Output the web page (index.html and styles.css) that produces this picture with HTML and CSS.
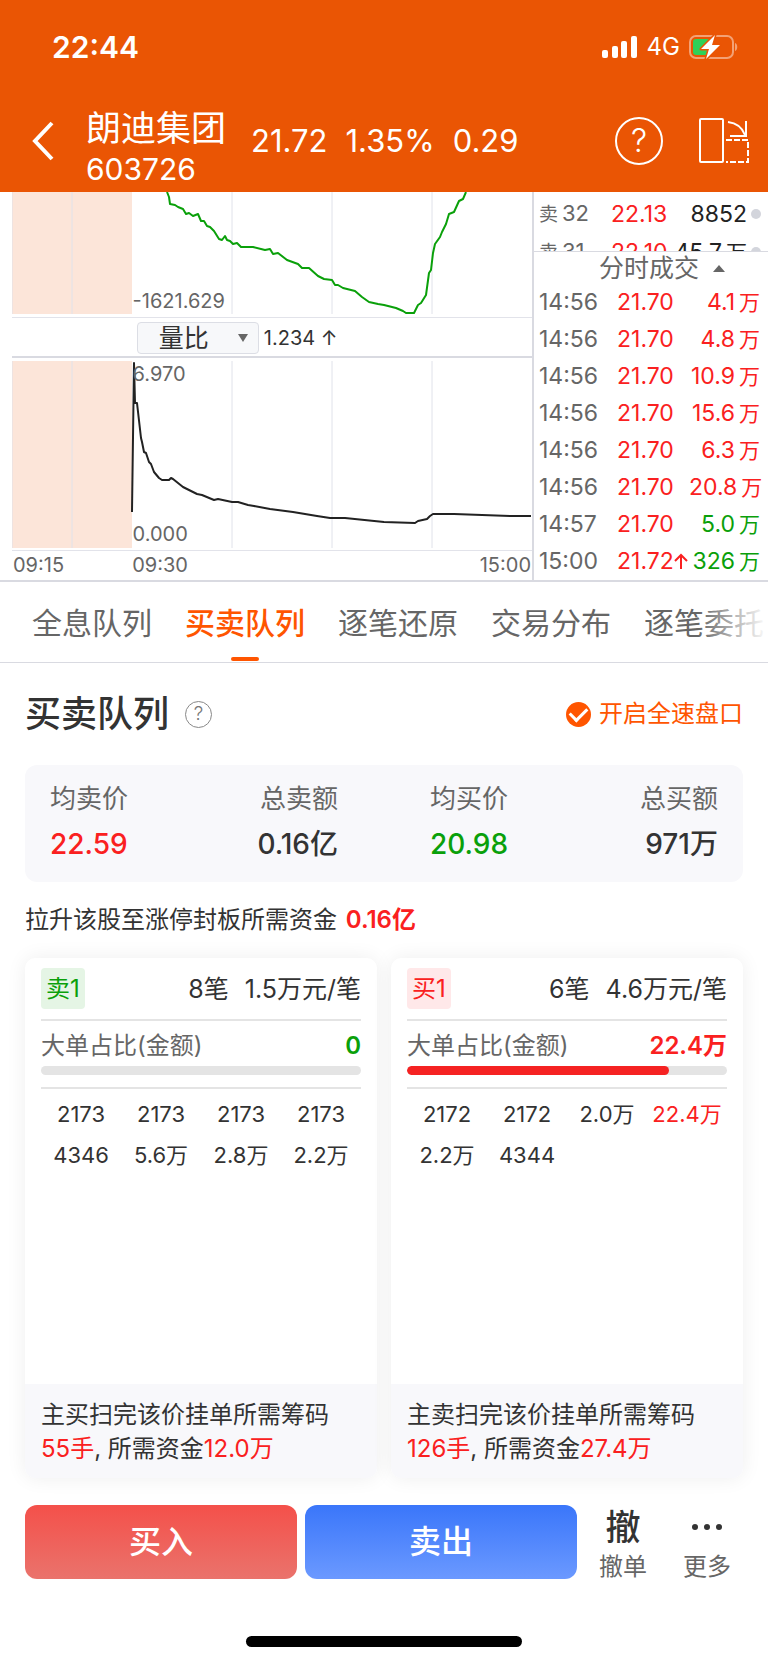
FILE: index.html
```html
<!DOCTYPE html>
<html lang="zh-CN">
<head>
    <meta charset="utf-8">
    <meta name="viewport" content="width=device-width, initial-scale=1">
    <title>朗迪集团 603726</title>
    <link rel="stylesheet" href="styles.css">
</head>
<body>
    <header class="header">
        <div class="status-bar">
            <span class="clock">22:44</span>
            <div class="status-icons">
                <svg width="36" height="22" viewBox="0 0 36 22" fill="#fff">
                    <rect x="0" y="14" width="6" height="8" rx="2"/>
                    <rect x="10" y="10" width="6" height="12" rx="2"/>
                    <rect x="19" y="5" width="6" height="17" rx="2"/>
                    <rect x="29" y="0" width="6" height="22" rx="2"/>
                </svg>
                <span class="network">4G</span>
                <svg width="50" height="26" viewBox="0 0 50 26">
                    <rect x="1" y="2" width="43" height="22" rx="6" fill="none" stroke="#fff" stroke-opacity=".45" stroke-width="2"/>
                    <path d="M46 9v8c3-1 3-7 0-8z" fill="#fff" fill-opacity=".45"/>
                    <rect x="4" y="5" width="17" height="16" rx="3" fill="#30d158"/>
                    <path d="M26 1 12 15h8l-3 10 14-14h-8z" fill="#fff" stroke="#ea5504" stroke-width="3" paint-order="stroke" stroke-linejoin="round"/>
                </svg>
            </div>
        </div>
        <div class="nav-bar">
            <button class="icon-btn" aria-label="返回">
                <svg width="22" height="40" viewBox="0 0 22 40" fill="none" stroke="#fff" stroke-width="4">
                    <path d="M20 2 3 20l17 18"/>
                </svg>
            </button>
            <div class="stock">
                <h1 class="stock-name">朗迪集团</h1>
                <div class="stock-code">603726</div>
            </div>
            <div class="quote">
                <span>21.72</span>
                <span>1.35%</span>
                <span>0.29</span>
            </div>
            <div class="nav-actions">
                <button class="icon-btn help" aria-label="帮助">?</button>
                <button class="icon-btn" aria-label="横屏">
                    <svg width="50" height="46" viewBox="0 0 50 46" fill="none" stroke="#fff" stroke-width="2">
                        <rect x="1" y="1" width="23" height="43" rx="1"/>
                        <path d="M29 4c9 1 14 5 17 13M47 3v15H31"/>
                        <path d="M27 22h22v22H27" stroke-dasharray="6 2"/>
                    </svg>
                </button>
            </div>
        </div>
    </header>

    <section class="market">
        <div class="charts">
            <div class="chart chart-flow">
                <svg class="plot" viewBox="0 0 520 122" preserveAspectRatio="none">
                    <rect width="120" height="122" fill="#fce5d9"/>
                    <path class="grid-line" d="M0 0v122M60 0v122M220 0v122M320 0v122M420 0v122"/>
                    <polyline class="line-green" points="155,0 157,5 158,12 163,13 166,15 171,17 174,22 177,21 181,24 186,22 189,29 192,29 195,34 198,35 202,39 207,47 210,48 213,44 215,48 218,49 221,52 225,51 229,55 241,55 253,58 258,57 261,62 266,61 275,68 286,72 290,76 297,76 306,84 312,87 320,88 323,93 326,93 331,96 343,99 350,105 357,110 366,112 372,113 384,116 391,119 394,121 402,121 406,113 409,111 414,103 417,81 419,78 421,61 423,52 428,45 430,40 434,32 437,22 442,20 447,9 451,7 454,0"/>
                </svg>
                <span class="chart-label label-bottom">-1621.629</span>
            </div>
            <div class="indicator">
                <div class="select-wrap">
                    <select class="indicator-select" aria-label="指标">
                        <option>量比</option>
                    </select>
                </div>
                <span>1.234 ↑</span>
            </div>
            <div class="chart chart-volume">
                <svg class="plot" viewBox="0 0 520 187" preserveAspectRatio="none">
                    <rect width="120" height="187" fill="#fce5d9"/>
                    <path class="grid-line" d="M0 0v187M60 0v187M220 0v187M320 0v187M420 0v187"/>
                    <polyline class="line-black" points="120,151 122,2 123,42 125,42 129,77 130,81 132,91 134,92 137,101 139,103 142,111 147,117 150,119 157,119 159,117 161,118 171,126 185,133 190,134 202,139 206,138 220,141 226,141 236,144 242,145 258,148 281,151 305,155 318,157 333,157 372,161 403,162 406,160 415,158 418,155 421,153 442,153 499,155 519,155"/>
                </svg>
                <span class="chart-label label-top">6.970</span>
                <span class="chart-label label-bottom">0.000</span>
            </div>
            <div class="axis">
                <span>09:15</span>
                <span>09:30</span>
                <span>15:00</span>
            </div>
        </div>

        <div class="ticks">
            <div class="book">
                <table class="book-table">
                    <tr><td>卖<span class="level">32</span></td><td class="red">22.13</td><td class="num">8852</td><td><i class="dot"></i></td></tr>
                    <tr><td>卖<span class="level">31</span></td><td class="red">22.10</td><td class="num">45.7<span class="unit">万</span></td><td><i class="dot"></i></td></tr>
                </table>
            </div>
            <button class="ticks-title">分时成交 <i class="caret-up"></i></button>
            <table class="ticks-table">
                <tr><td>14:56</td><td class="red">21.70</td><td class="num red">4.1<span class="unit">万</span></td></tr>
                <tr><td>14:56</td><td class="red">21.70</td><td class="num red">4.8<span class="unit">万</span></td></tr>
                <tr><td>14:56</td><td class="red">21.70</td><td class="num red">10.9<span class="unit">万</span></td></tr>
                <tr><td>14:56</td><td class="red">21.70</td><td class="num red">15.6<span class="unit">万</span></td></tr>
                <tr><td>14:56</td><td class="red">21.70</td><td class="num red">6.3<span class="unit">万</span></td></tr>
                <tr><td>14:56</td><td class="red">21.70</td><td class="num red">20.8<span class="unit">万</span></td></tr>
                <tr><td>14:57</td><td class="red">21.70</td><td class="num green">5.0<span class="unit">万</span></td></tr>
                <tr>
                    <td>15:00</td>
                    <td class="red">21.72<svg class="arrow-up" width="14" height="16" viewBox="0 0 14 16" fill="none" stroke="currentColor" stroke-width="2"><path d="M7 16V2M1 8l6-6 6 6"/></svg></td>
                    <td class="num green">326<span class="unit">万</span></td>
                </tr>
            </table>
        </div>
    </section>

    <nav class="tabs">
        <a class="tab" href="#">全息队列</a>
        <a class="tab active" href="#">买卖队列</a>
        <a class="tab" href="#">逐笔还原</a>
        <a class="tab" href="#">交易分布</a>
        <a class="tab" href="#">逐笔委托</a>
    </nav>

    <main class="content">
        <div class="section-head">
            <h2 class="section-title">买卖队列</h2>
            <button class="help-small" aria-label="说明">?</button>
            <label class="speed">
                <input class="speed-check" type="checkbox" checked>
                开启全速盘口
            </label>
        </div>

        <div class="summary">
            <div class="summary-pair">
                <div class="stat">
                    <div class="stat-label">均卖价</div>
                    <div class="stat-value red">22.59</div>
                </div>
                <div class="stat stat-right">
                    <div class="stat-label">总卖额</div>
                    <div class="stat-value">0.16亿</div>
                </div>
            </div>
            <div class="summary-pair">
                <div class="stat">
                    <div class="stat-label">均买价</div>
                    <div class="stat-value green">20.98</div>
                </div>
                <div class="stat stat-right">
                    <div class="stat-label">总买额</div>
                    <div class="stat-value">971万</div>
                </div>
            </div>
        </div>

        <p class="limit-up">拉升该股至涨停封板所需资金 <b class="red">0.16亿</b></p>

        <div class="queues">
            <article class="queue">
                <div class="queue-body">
                    <div class="queue-head">
                        <span class="badge badge-sell">卖1</span>
                        <span class="queue-count">8笔</span>
                        <span>1.5万元/笔</span>
                    </div>
                    <div class="ratio">
                        <div class="ratio-text">
                            <span>大单占比(金额)</span>
                            <b class="green">0</b>
                        </div>
                        <div class="bar"><div class="bar-fill" style="width: 0%"></div></div>
                    </div>
                    <div class="orders">
                        <span>2173</span><span>2173</span><span>2173</span><span>2173</span>
                        <span>4346</span><span>5.6万</span><span>2.8万</span><span>2.2万</span>
                    </div>
                </div>
                <p class="queue-foot">主买扫完该价挂单所需筹码<br><span class="red">55手</span>, 所需资金<span class="red">12.0万</span></p>
            </article>
            <article class="queue">
                <div class="queue-body">
                    <div class="queue-head">
                        <span class="badge badge-buy">买1</span>
                        <span class="queue-count">6笔</span>
                        <span>4.6万元/笔</span>
                    </div>
                    <div class="ratio">
                        <div class="ratio-text">
                            <span>大单占比(金额)</span>
                            <b class="red">22.4万</b>
                        </div>
                        <div class="bar"><div class="bar-fill" style="width: 82%"></div></div>
                    </div>
                    <div class="orders">
                        <span>2172</span><span>2172</span><span>2.0万</span><span class="red">22.4万</span>
                        <span>2.2万</span><span>4344</span>
                    </div>
                </div>
                <p class="queue-foot">主卖扫完该价挂单所需筹码<br><span class="red">126手</span>, 所需资金<span class="red">27.4万</span></p>
            </article>
        </div>
    </main>

    <footer class="actions">
        <button class="trade-btn buy">买入</button>
        <button class="trade-btn sell">卖出</button>
        <button class="tool-btn"><span class="tool-icon">撤</span>撤单</button>
        <button class="tool-btn">
            <span class="tool-icon">
                <svg width="32" height="8" viewBox="0 0 32 8" fill="#333">
                    <circle cx="4" cy="4" r="3"/><circle cx="16" cy="4" r="3"/><circle cx="28" cy="4" r="3"/>
                </svg>
            </span>更多
        </button>
    </footer>
    <div class="home-indicator"></div>
</body>
</html>
```

FILE: styles.css
```css
* {
    box-sizing: border-box;
}
body {
    display: flex;
    flex-direction: column;
    min-height: 100vh;
    margin: 0;
    background: #fff;
    color: #333;
    font-family: Inter, "Noto Sans CJK SC", sans-serif;
    font-size: 24px;
    line-height: 34px;
}
h1, h2, p {
    margin: 0;
    font-weight: 400;
}
button, select, input {
    margin: 0;
    padding: 0;
    border: 0;
    background: none;
    color: inherit;
    font: inherit;
}
b {
    font-weight: 600;
}
svg {
    display: block;
}
.red {
    color: #fa2020;
}
.green {
    color: #0aa00a;
}

/* header */
.header {
    height: 192px;
    background: #ea5504;
    color: #fff;
}
.status-bar {
    display: flex;
    align-items: center;
    justify-content: space-between;
    height: 94px;
    padding: 0 29px 0 52px;
}
.clock {
    font-size: 30px;
    font-weight: 600;
}
.status-icons {
    display: flex;
    align-items: center;
    gap: 9px;
}
.nav-bar {
    display: flex;
    align-items: center;
    height: 94px;
    padding: 0 19px 0 32px;
}
.icon-btn {
    display: flex;
    align-items: center;
    justify-content: center;
}
.stock {
    padding-top: 14px;
    margin-left: 32px;
}
.stock-name {
    font-size: 35px;
    line-height: 42px;
}
.stock-code {
    font-size: 30px;
    line-height: 40px;
}
.quote {
    display: flex;
    gap: 18px;
    margin-left: 25px;
    font-size: 31px;
}
.nav-actions {
    display: flex;
    align-items: center;
    gap: 36px;
    margin-left: auto;
}
.help {
    width: 48px;
    height: 48px;
    border: 2px solid #fff;
    border-radius: 50%;
    font-size: 32px;
    font-weight: 300;
}

/* charts and ticks */
.market {
    display: grid;
    grid-template-columns: 1fr 236px;
    border-bottom: 2px solid #d9dae1;
    color: #666;
}
.charts {
    padding-left: 12px;
    font-size: 20px;
}
.chart {
    position: relative;
}
.chart-flow {
    padding-bottom: 3px;
    border-bottom: 1px solid #e2e3ea;
}
.chart-volume {
    padding: 3px 0 2px;
    border-top: 2px solid #d9dae1;
    border-bottom: 1px solid #e2e3ea;
}
.plot {
    width: 100%;
    height: 122px;
}
.chart-volume .plot {
    height: 187px;
}
.grid-line {
    fill: none;
    stroke: #e0e2ea;
    stroke-width: 1;
}
.line-green, .line-black {
    fill: none;
    stroke: #0aa00a;
    stroke-width: 2;
    stroke-linejoin: round;
}
.line-black {
    stroke: #222;
}
.chart-label {
    position: absolute;
    left: 23%;
    padding-left: 1px;
    line-height: 24px;
}
.label-top {
    top: 4px;
}
.label-bottom {
    bottom: 4px;
}
.indicator {
    display: flex;
    align-items: center;
    gap: 5px;
    height: 38px;
    padding-top: 2px;
    margin-left: 24%;
    color: #333;
}
.select-wrap {
    position: relative;
}
.select-wrap::after {
    content: "";
    position: absolute;
    right: 11px;
    top: 12px;
    border: 5px solid transparent;
    border-top: 8px solid #666;
    border-bottom: 0;
    pointer-events: none;
}
.indicator-select {
    display: block;
    appearance: none;
    width: 122px;
    height: 32px;
    padding-left: 21px;
    border: 1px solid #dcdee5;
    border-radius: 4px;
    background: #f7f8fa;
    font-size: 25px;
    line-height: 30px;
}
.axis {
    display: grid;
    grid-template-columns: 23% 1fr auto;
    padding: 0 1px;
    line-height: 29px;
}
.ticks {
    border-left: 2px solid #d9dae1;
    font-size: 23px;
}
.book {
    height: 60px;
    padding-top: 3px;
    border-bottom: 1px solid #d9dae1;
    overflow: hidden;
}
.book-table, .ticks-table {
    width: 100%;
    border-collapse: collapse;
    table-layout: fixed;
}
td {
    height: 37px;
    padding: 0;
    line-height: 37px;
    white-space: nowrap;
}
td:first-child {
    width: 83px;
    padding-left: 5px;
}
.num {
    text-align: right;
}
.unit {
    margin-left: 4px;
    font-size: 21px;
}
.book-table td:first-child {
    width: 77px;
    font-size: 19px;
}
.level {
    margin-left: 4px;
    font-size: 22px;
}
.book-table td:nth-child(2) {
    width: 58px;
}
.book-table .num {
    color: #222;
}
.book-table td:last-child {
    width: 21px;
    padding-left: 4px;
}
.dot {
    display: block;
    width: 10px;
    height: 10px;
    border-radius: 50%;
    background: #d3d5dc;
}
.ticks-title {
    display: flex;
    align-items: center;
    justify-content: center;
    gap: 14px;
    width: 100%;
    height: 32px;
    padding-left: 22px;
    font-size: 25px;
    line-height: 30px;
}
.caret-up {
    border: 6px solid transparent;
    border-bottom: 7px solid #666;
    border-top: 0;
}
.ticks-table td:nth-child(2) {
    width: 72px;
}
.ticks-table .num {
    padding-right: 8px;
}
.arrow-up {
    display: inline-block;
}

/* tabs */
.tabs {
    display: flex;
    gap: 33px;
    height: 81px;
    padding-left: 32px;
    border-bottom: 1px solid #d9dae1;
    overflow: hidden;
    position: relative;
}
.tabs::after {
    content: "";
    position: absolute;
    top: 0;
    right: 0;
    width: 70px;
    height: 100%;
    background: linear-gradient(to right, transparent, #fff);
}
.tab {
    display: flex;
    flex: none;
    flex-direction: column;
    align-items: center;
    color: #666;
    font-size: 30px;
    line-height: 76px;
    padding-top: 3px;
    text-decoration: none;
}
.tab.active {
    color: #ff5500;
    font-weight: 500;
}
.tab.active::after {
    content: "";
    width: 28px;
    height: 4px;
    margin-top: -4px;
    border-radius: 2px;
    background: #ff5500;
}

/* content */
.content {
    display: flex;
    flex: 1;
    flex-direction: column;
    padding: 0 25px;
}
.section-head {
    display: flex;
    align-items: center;
    height: 102px;
}
.section-title {
    font-size: 36px;
    font-weight: 500;
}
.help-small {
    width: 27px;
    height: 27px;
    margin-left: 16px;
    border: 1px solid #888;
    border-radius: 50%;
    color: #777;
    font-size: 19px;
    font-weight: 300;
    line-height: 24px;
}
.speed {
    display: flex;
    align-items: center;
    gap: 8px;
    margin-left: auto;
    color: #ff5500;
}
.speed-check {
    display: grid;
    place-items: center;
    appearance: none;
    width: 25px;
    height: 25px;
    border-radius: 50%;
    background: #ff5500;
}
.speed-check:checked::after {
    content: "";
    width: 14px;
    height: 8px;
    margin-bottom: 4px;
    border: solid #fff;
    border-width: 0 0 3px 3px;
    transform: rotate(-45deg);
}
.summary {
    display: grid;
    grid-template-columns: 1fr 1fr;
    gap: 92px;
    padding: 12px 25px 15px;
    border-radius: 12px;
    background: #f8f8fb;
}
.summary-pair {
    display: flex;
    justify-content: space-between;
}
.stat-right {
    text-align: right;
}
.stat-label {
    color: #666;
    font-size: 26px;
    line-height: 44px;
}
.stat-value {
    font-size: 28px;
    line-height: 46px;
    font-weight: 500;
}
.limit-up {
    padding: 20px 0;
    line-height: 36px;
}
.limit-up b {
    margin-left: 2px;
}
.queues {
    display: grid;
    flex: 1;
    grid-template-columns: 1fr 1fr;
    gap: 14px;
}
.queue {
    display: flex;
    flex-direction: column;
    border-radius: 10px;
    background: #fff;
    box-shadow: 0 0 20px rgba(0, 0, 0, 0.07);
    overflow: hidden;
}
.queue-body {
    flex: 1;
    padding: 10px 16px;
}
.queue-head {
    display: flex;
    align-items: center;
    gap: 16px;
    padding-bottom: 10px;
    font-size: 25px;
}
.queue-count {
    margin-left: auto;
}
.badge {
    padding: 0 5px;
    border-radius: 4px;
    font-size: 24px;
    line-height: 41px;
}
.badge-sell {
    background: #e5f5e5;
    color: #0aa00a;
}
.badge-buy {
    background: #ffe8e9;
    color: #fa2020;
}
.ratio {
    padding: 8px 0 12px;
    border-top: 2px solid #e4e4e4;
    border-bottom: 2px solid #e4e4e4;
}
.ratio-text {
    display: flex;
    justify-content: space-between;
    color: #666;
    padding-bottom: 3px;
}
.bar {
    height: 9px;
    border-radius: 5px;
    background: #e4e4e4;
    overflow: hidden;
}
.bar-fill {
    height: 100%;
    border-radius: 5px;
    background: #f52222;
}
.orders {
    display: grid;
    grid-template-columns: repeat(4, 1fr);
    padding-top: 5px;
    font-size: 22px;
    line-height: 41px;
    text-align: center;
}
.queue-foot {
    height: 94px;
    padding: 14px 16px 12px;
    background: #f8f8fb;
}

/* bottom actions */
.actions {
    display: flex;
    align-items: flex-start;
    gap: 8px;
    padding: 27px 23px 0 25px;
}
.trade-btn {
    flex: 1;
    height: 74px;
    border-radius: 12px;
    color: #fff;
    font-size: 32px;
    font-weight: 500;
}
.buy {
    background: linear-gradient(#f4504a, #ea736c);
}
.sell {
    background: linear-gradient(#3a76fa, #6b99ff);
}
.tool-btn {
    width: 76px;
    color: #666;
    line-height: 36px;
}
.tool-icon {
    display: flex;
    align-items: center;
    justify-content: center;
    height: 44px;
    color: #333;
    font-size: 35px;
    font-weight: 500;
}
.home-indicator {
    width: 36%;
    height: 11px;
    margin: 51px auto 16px;
    border-radius: 6px;
    background: #000;
}
```
